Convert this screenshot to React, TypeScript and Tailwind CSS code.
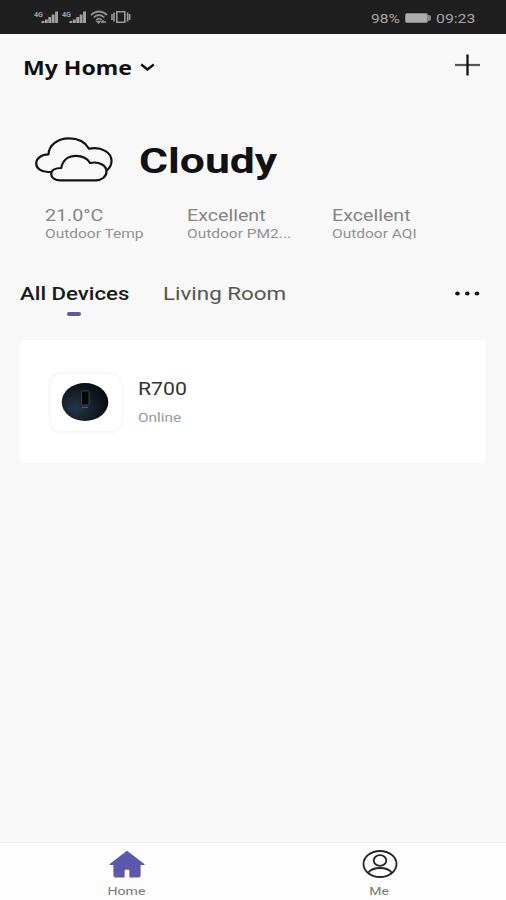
import type { ReactNode } from "react";

function Label({ className, children }: { className: string; children: ReactNode }) {
  return <span className={"block w-max origin-left whitespace-nowrap " + className}>{children}</span>;
}

function Signal() {
  return (
    <svg width="27" height="16" viewBox="0 0 27 16" className="shrink-0 fill-[#a0a0a0]">
      <text x="0" y="7.800" fontSize="7.500" fontWeight="700" fontFamily="Roboto, sans-serif" textLength="9" lengthAdjust="spacingAndGlyphs">4G</text>
      <path d="M7.500 12h2.900v2H7.500zM10.900 10.500h2.900V14h-2.900zM14.300 8h2.900v6h-2.900zM17.700 5.500h2.900V14h-2.900zM21.100 2.500H24V14h-2.900z" />
    </svg>
  );
}

function StatusBar() {
  return (
    <header className="flex h-[34px] shrink-0 items-start bg-[#1f1f1f] pl-[34px] pt-[9px] text-[#a5a5a5]">
      <div className="flex w-[337px]">
        <Signal />
        <div className="ml-px"><Signal /></div>
        <svg width="18" height="16" viewBox="0 0 18 16" className="ml-px fill-none stroke-[#929292]" strokeWidth="1.7">
          <path d="M1 6q8-7 16 0M3.700 8.500q5.300-5 10.600 0M6.200 11q2.800-2.600 5.600 0" />
          <path d="M7 12.500h3L8.500 14zM11 13h5M13 11v3" strokeWidth="1.300" />
        </svg>
        <svg width="20" height="16" viewBox="0 0 20 16" className="ml-[3px] fill-none stroke-[#9a9a9a]" strokeWidth="1.600">
          <path d="M5.800 2.800h8v10.400h-8zM3 3.500v9M16.600 3.500v9M1 5v6M18.600 5v6" />
        </svg>
      </div>
      <div className="w-[34px]"><Label className="scale-x-[1.15] text-[13.5px] leading-[18px]">98%</Label></div>
      <div className="mt-1 h-[10px] w-[23px] rounded-[2px] border border-[#858585] bg-[#adadad]" />
      <div className="mt-1.5 h-[6px] w-[3px] rounded-r-[2px] bg-[#8a8a8a]" />
      <Label className="ml-[5px] scale-x-[1.17] text-[13.5px] leading-[18px]">09:23</Label>
    </header>
  );
}

function CloudIcon() {
  return (
    <svg width="78" height="46" viewBox="0 0 78 46" fill="none" stroke="#111214" strokeWidth="2.200" strokeLinejoin="round">
      <path d="M16.500 35h-3.500C5.500 34.700 1.200 31 1.200 26.500c0-5 5-9.200 12.300-9.200C14 8 22.500 1.300 34 1.300c9 0 16.500 4 20 10.400C67 9.500 76.500 15.500 76.500 24c0 4.200-2 7.500-5.500 9.800" />
      <path d="M25.500 43.300c-5.500 0-9.300-2.500-9.300-6.100s3.800-6.200 10-6.200C27.500 23.500 33 18.800 41 18.800c6.500 0 11.500 2.700 14 7.200 9-2 16.500 2.500 16.500 8.500 0 5-4.500 8.800-10.500 8.800z" />
    </svg>
  );
}

function Reading({ value, name, className }: { value: string; name: string; className: string }) {
  return (
    <div className={className}>
      <Label className="scale-x-[1.19] text-[16.500px] leading-5 text-[#858585]">{value}</Label>
      <Label className="scale-x-[1.24] text-[12.500px] leading-4 text-[#929292]">{name}</Label>
    </div>
  );
}

function DeviceCard() {
  return (
    <article className="ml-5 mt-6 flex h-[123px] w-[466px] rounded-[5px] bg-white pl-[31px] pt-[34px]">
      <div className="flex h-[57px] w-[70px] items-center justify-center rounded-[10px] bg-white pr-[3px] shadow-[0_0_4px_1px_rgba(0,0,0,0.06)]">
        <svg width="48" height="40" viewBox="0 0 48 40">
          <defs>
            <radialGradient id="body" cx="0.3" cy="0.65" r="0.7">
              <stop offset="0" stopColor="#27364a" />
              <stop offset="0.600" stopColor="#141c27" />
              <stop offset="1" stopColor="#0a0d12" />
            </radialGradient>
          </defs>
          <ellipse cx="24" cy="19" rx="23.300" ry="19" fill="url(#body)" />
          <rect x="20.500" y="8" width="7.500" height="14" rx="1" fill="#05070a" stroke="#424952" strokeWidth="0.800" />
          <path d="M21 24.500h6" stroke="#5a626c" strokeWidth="0.900" />
        </svg>
      </div>
      <div className="ml-[17px] mt-1">
        <Label className="scale-x-[1.18] text-[18px] leading-[22px] text-[#333]">R700</Label>
        <Label className="mt-2.5 scale-x-[1.23] text-[12.500px] leading-4 text-[#999]">Online</Label>
      </div>
    </article>
  );
}

export default function App() {
  return (
    <div className="flex h-[900px] w-[506px] flex-col overflow-hidden bg-[#f8f8f8] font-[Roboto,sans-serif]">
      <StatusBar />
      <main className="flex-1">
        <div className="flex h-[66px] items-center pl-[23px] pr-[25px]">
          <div className="w-[117px] pt-0.5">
            <Label className="scale-x-[1.18] font-['Noto_Sans',sans-serif] text-[19.500px] font-bold leading-6 text-[#111]">My Home</Label>
          </div>
          <svg width="15" height="9" viewBox="0 0 15 9" fill="none" stroke="#111" strokeWidth="2.300"><path d="M1.200 1.500l6.300 5 6.300-5" /></svg>
          <svg width="26" height="22" viewBox="0 0 26 22" className="-mt-1 ml-auto"><path d="M0 11h25" stroke="#555" strokeWidth="2.200" /><path d="M12.500 0.500v21" stroke="#111" strokeWidth="2.300" /></svg>
        </div>
        <div className="flex h-[106px] pl-[35px] pt-[37px]">
          <CloudIcon />
          <Label className="ml-[26px] mt-[5px] scale-x-[1.27] text-[35px] font-bold leading-10 text-[#111214]">Cloudy</Label>
        </div>
        <div className="flex pl-[45px]">
          <Reading className="w-[142px]" value="21.0°C" name="Outdoor Temp" />
          <Reading className="w-[145px]" value="Excellent" name="Outdoor PM2..." />
          <Reading className="w-[110px]" value="Excellent" name="Outdoor AQI" />
        </div>
        <nav className="mt-[40px] flex h-[34px] pl-5 pr-[26px]">
          <div className="w-[143px]">
            <Label className="scale-x-[1.2] text-[18.500px] font-medium leading-6 text-[#1a1a1a]">All Devices</Label>
            <div className="ml-[47px] mt-1.5 h-[4px] w-[14px] rounded-full bg-[#5c57a6]" />
          </div>
          <Label className="scale-x-[1.21] text-[18.500px] leading-6 text-[#555]">Living Room</Label>
          <svg width="26" height="5" viewBox="0 0 26 5" fill="#111" className="ml-auto mt-[9px]"><ellipse cx="3.500" cy="2.500" rx="2.300" ry="2" /><ellipse cx="13.300" cy="2.500" rx="2.300" ry="2" /><ellipse cx="23" cy="2.500" rx="2.300" ry="2" /></svg>
        </nav>
        <DeviceCard />
      </main>
      <footer className="flex h-[58px] shrink-0 border-t border-[#eee] bg-[#fdfdfd] pt-[7px] text-[#777]">
        <div className="flex w-[253px] flex-col items-center">
          <svg width="38" height="28" viewBox="0 0 38 28" fill="#5c58ab" stroke="#5c58ab" strokeWidth="1.200" strokeLinejoin="round" className="shrink-0"><path d="M19 1.500L2 14.500h4V25q0 2 2.200 2H16v-6q0-2 3-2t3 2v6h7.800q2.200 0 2.200-2V14.500h4z" /></svg>
          <span className="mt-[6px] block origin-center scale-x-[1.22] text-[11.500px] leading-[14px]">Home</span>
        </div>
        <div className="flex w-[253px] flex-col items-center">
          <svg width="36" height="28" viewBox="0 0 36 28" fill="none" stroke="#252525" strokeWidth="1.800" className="shrink-0"><ellipse cx="18" cy="14" rx="16.500" ry="13" /><ellipse cx="18" cy="10.500" rx="6.300" ry="5.300" /><path d="M6 23q3.500-5 12-5t12 5" /></svg>
          <span className="mt-[6px] block origin-center scale-x-[1.22] text-[11.500px] leading-[14px]">Me</span>
        </div>
      </footer>
    </div>
  );
}
